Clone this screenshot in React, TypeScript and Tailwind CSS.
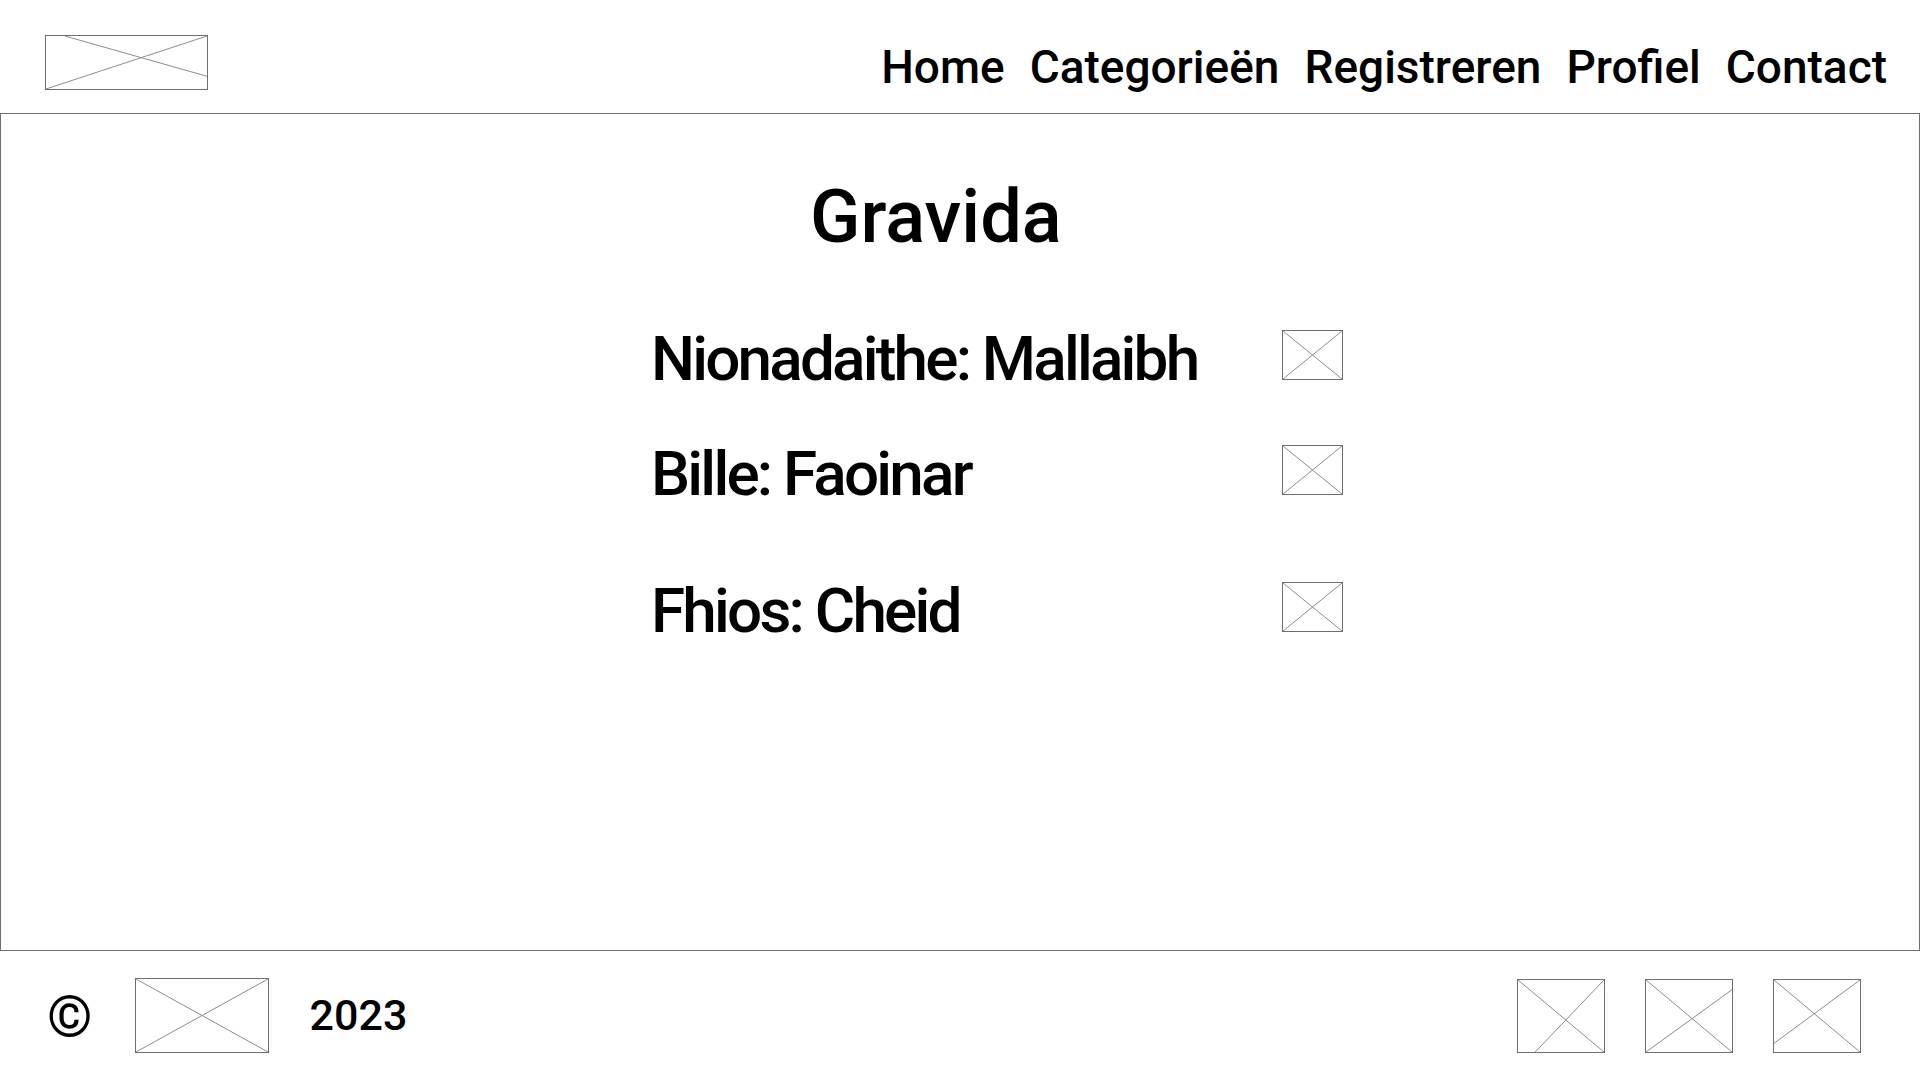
import React from "react";

type Line = [number, number, number, number];

function Placeholder({ className, lines }: { className: string; lines: Line[] }) {
  return (
    <div className={`border border-[#6f6f6f] bg-white ${className}`}>
      <svg viewBox="0 0 100 100" preserveAspectRatio="none" className="w-full h-full block">
        {lines.map(([x1, y1, x2, y2], i) => (
          <line
            key={i}
            x1={x1}
            y1={y1}
            x2={x2}
            y2={y2}
            stroke="#8c8c8c"
            strokeWidth={1}
            vectorEffect="non-scaling-stroke"
          />
        ))}
      </svg>
    </div>
  );
}

const cross: Line[] = [
  [0, 0, 100, 100],
  [100, 0, 0, 100],
];

const rows = ["Nionadaithe: Mallaibh", "Bille: Faoinar", "Fhios: Cheid"];

export default function App() {
  return (
    <div className="w-[1920px] h-[1080px] bg-white text-black font-['Roboto','Liberation_Sans',sans-serif] flex flex-col overflow-hidden">
      {/* Header */}
      <header className="h-[113px] shrink-0 flex items-start justify-between pl-[45px] pr-[33px]">
        <Placeholder
          className="mt-[35px] w-[163px] h-[55px]"
          lines={[
            [0, 100, 100, 0],
            [11.7, 0, 100, 76],
          ]}
        />
        <nav className="mt-[44px] flex gap-[25px] text-[46px] leading-none font-medium">
          <a>Home</a>
          <a>Categorieën</a>
          <a>Registreren</a>
          <a>Profiel</a>
          <a>Contact</a>
        </nav>
      </header>

      {/* Main */}
      <main className="h-[838px] shrink-0 border border-[#707070] pl-[650px] pt-[66px]">
        <h1 className="ml-[159px] text-[74px] leading-none font-medium">Gravida</h1>
        <div className="mt-[74px] flex flex-col">
          {rows.map((r, i) => (
            <div
              key={r}
              className={`flex items-baseline ${i === 1 ? "mt-[53px]" : i === 2 ? "mt-[75px]" : ""}`}
            >
              <span className="w-[631px] text-[62px] leading-none font-medium tracking-[-0.045em]">{r}</span>
              <Placeholder className="w-[61px] h-[50px]" lines={cross} />
            </div>
          ))}
        </div>
      </main>

      {/* Footer */}
      <footer className="flex-1 flex items-center justify-between pl-[47px] pr-[59px]">
        <div className="flex items-center">
          <span className="text-[58px] leading-none font-medium">©</span>
          <Placeholder className="ml-[42px] w-[134px] h-[75px]" lines={cross} />
          <span className="ml-[41px] text-[43px] leading-none font-medium">2023</span>
        </div>
        <div className="flex items-center gap-[40px]">
          <Placeholder
            className="w-[88px] h-[74px]"
            lines={[
              [0, 0, 100, 100],
              [100, 0, 20, 100],
            ]}
          />
          <Placeholder
            className="w-[88px] h-[74px]"
            lines={[
              [0, 0, 100, 100],
              [100, 13.5, 0, 100],
            ]}
          />
          <Placeholder
            className="w-[88px] h-[74px]"
            lines={[
              [0, 0, 100, 100],
              [100, 0, 0, 88],
            ]}
          />
        </div>
      </footer>
    </div>
  );
}
